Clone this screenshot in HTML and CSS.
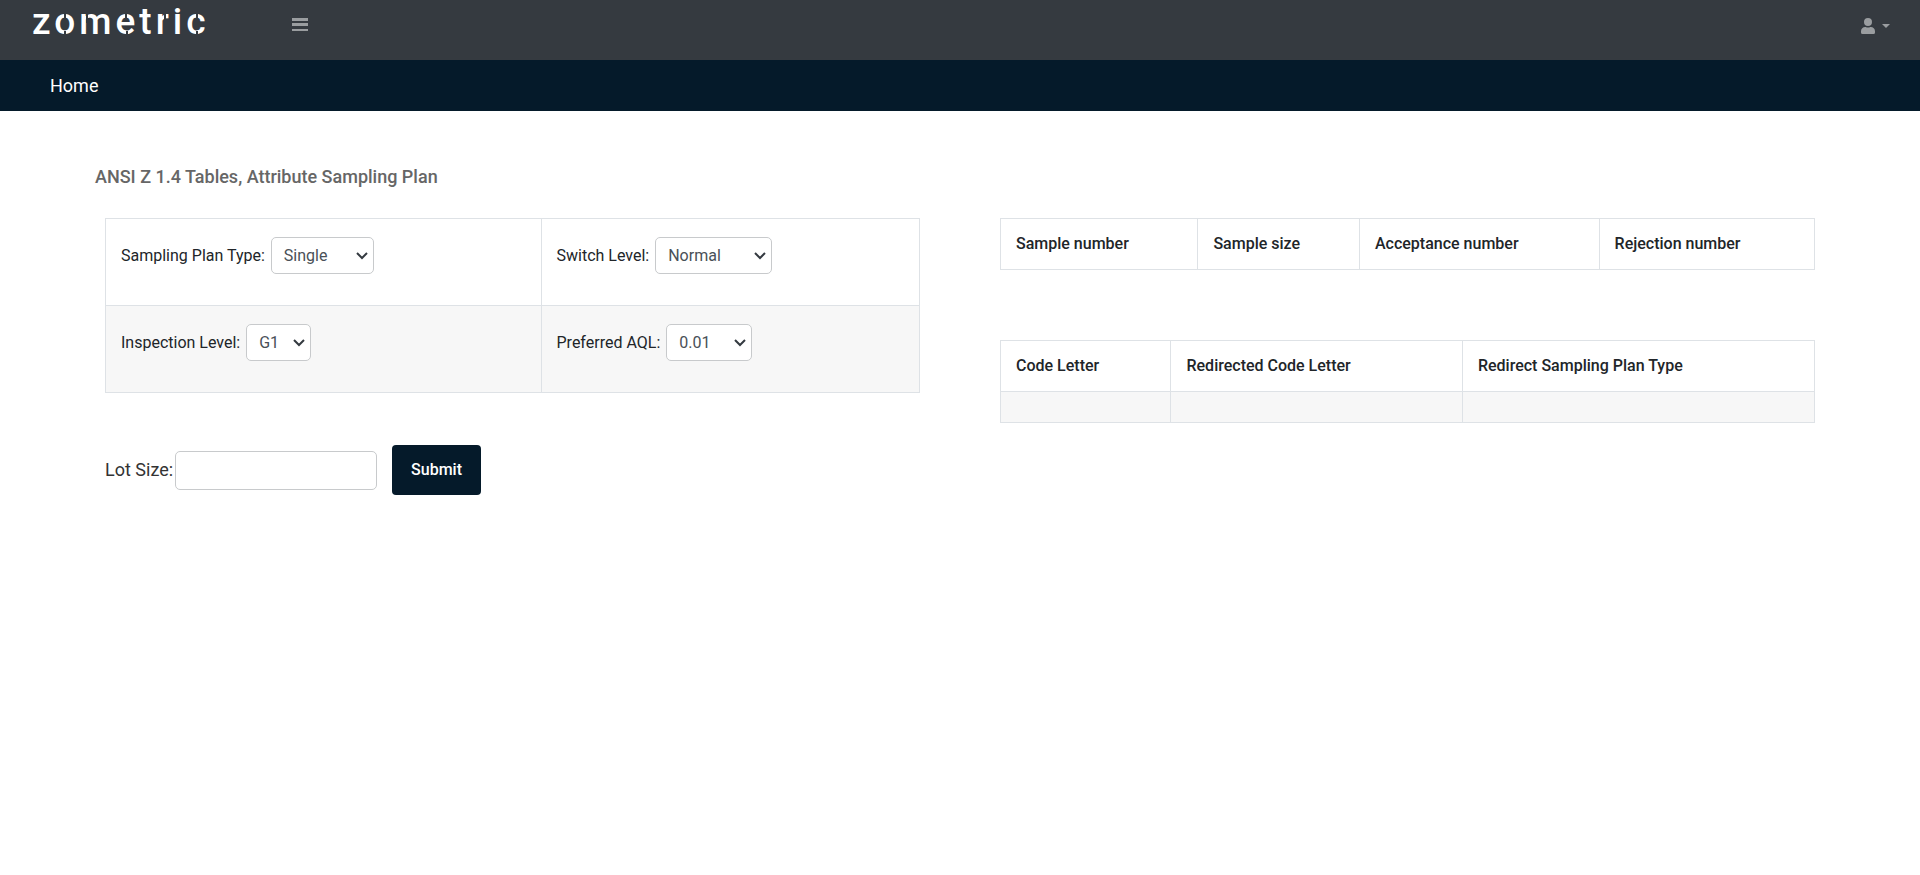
FILE: index.html
```html
<!DOCTYPE html>
<html lang="en">
<head>
<meta charset="utf-8">
<meta name="viewport" content="width=device-width, initial-scale=1">
<title>ANSI Z 1.4 Tables, Attribute Sampling Plan</title>
<link rel="stylesheet" href="styles.css">
</head>
<body>
<header class="topbar">
  <a class="brand" href="#">zometric
    <svg class="brand-cuts" viewBox="0 0 180 40" aria-hidden="true">
      <path d="M33 13v7M33 31v7M55 14v9M94 13v7M95 31v7M133 14v9M165 13v7M165 31v7"/>
    </svg>
  </a>
  <button class="icon-button" type="button" aria-label="Toggle menu">
    <svg width="16" height="14" viewBox="0 0 16 14"><path fill="currentColor" d="M0 0h16v3H0zM0 5h16v3H0zM0 11h16v2H0z"/></svg>
  </button>
  <button class="icon-button user-menu" type="button" aria-label="Account">
    <svg width="14" height="16" viewBox="0 0 14 16"><path fill="currentColor" d="M7 8a4 4 0 1 0 0-8 4 4 0 0 0 0 8zm2.800 1h-.5a5.500 5.500 0 0 1-4.600 0h-.5A4.200 4.200 0 0 0 0 13.200v1.300A1.500 1.500 0 0 0 1.500 16h11a1.500 1.500 0 0 0 1.500-1.500v-1.300A4.200 4.200 0 0 0 9.800 9z"/></svg>
    <svg width="8" height="4" viewBox="0 0 8 4"><path fill="currentColor" d="M0 0h8L4 4z"/></svg>
  </button>
</header>
<nav class="subnav"><a href="#">Home</a></nav>
<main class="page">
  <h1 class="title">ANSI Z 1.4 Tables, Attribute Sampling Plan</h1>
  <div class="columns">
    <form class="plan">
      <table class="table form-table">
        <tbody>
          <tr>
            <td><label for="plan">Sampling Plan Type:</label>
              <select class="control" id="plan"><option>Single</option><option>Double</option><option>Multiple</option></select></td>
            <td><label for="switch">Switch Level:</label>
              <select class="control" id="switch"><option>Normal</option><option>Tightened</option><option>Reduced</option></select></td>
          </tr>
          <tr>
            <td><label for="level">Inspection Level:</label>
              <select class="control" id="level"><option>G1</option><option>G2</option><option>G3</option><option>S1</option><option>S2</option></select></td>
            <td><label for="aql">Preferred AQL:</label>
              <select class="control" id="aql"><option>0.01</option><option>0.015</option><option>0.025</option></select></td>
          </tr>
        </tbody>
      </table>
      <div class="lot">
        <label for="lot">Lot Size:</label>
        <input class="control lot-input" id="lot" type="text">
        <button class="submit" type="button">Submit</button>
      </div>
    </form>
    <section class="results">
      <table class="table">
        <thead><tr><th>Sample number</th><th>Sample size</th><th>Acceptance number</th><th>Rejection number</th></tr></thead>
      </table>
      <table class="table">
        <thead><tr><th>Code Letter</th><th>Redirected Code Letter</th><th>Redirect Sampling Plan Type</th></tr></thead>
        <tbody><tr><td></td><td></td><td></td></tr></tbody>
      </table>
    </section>
  </div>
</main>
</body>
</html>
```
FILE: styles.css
```css
* { box-sizing: border-box; }
body {
  margin: 0;
  background: #fff;
  color: #212529;
  font: 16px/20px Roboto, sans-serif;
}
a { color: inherit; text-decoration: none; }
.topbar {
  display: flex;
  align-items: flex-start;
  height: 60px;
  padding: 0 30px 0 32px;
  background: #353a40;
}
.brand {
  position: relative;
  width: 260px;
  color: #fff;
  font-size: 37px;
  font-weight: 500;
  line-height: 44px;
  letter-spacing: 4px;
}
.brand-cuts {
  position: absolute;
  left: 0;
  top: 0;
  width: 180px;
  height: 40px;
  fill: none;
  stroke: #353a40;
  stroke-width: 2;
}
.icon-button {
  display: flex;
  padding: 18px 0 0;
  border: 0;
  background: none;
  color: #9a9da0;
}
.user-menu {
  align-items: center;
  gap: 7px;
  margin-left: auto;
}
.subnav {
  padding: 16px 50px 15px;
  background: #051a2a;
  color: #fff;
  font-size: 18px;
}
.page { padding: 56px 105px 40px; }
.title {
  margin: 0 -10px 31px;
  color: #666;
  font-size: 18px;
  font-weight: 500;
  line-height: 20px;
}
.columns {
  display: grid;
  grid-template-columns: 1fr 1fr;
  gap: 80px;
}
.table {
  width: 100%;
  border-collapse: collapse;
}
.table th, .table td {
  padding: 15px;
  border: 1px solid #dee2e6;
  text-align: left;
}
.table th { font-weight: 500; }
.results .table td, .form-table tr:nth-child(2) { background: #f7f7f7; }
.table.form-table td { padding: 18px 15px 31px; }
.control {
  height: 37px;
  padding: 6px 31px 6px 12px;
  border: 1px solid #c8cacc;
  border-radius: 5px;
  background: #fff;
  color: #495057;
  font: inherit;
}
select.control {
  appearance: none;
  margin-left: 2px;
  background: #fff url("data:image/svg+xml,%3Csvg xmlns='http://www.w3.org/2000/svg' width='12' height='8'%3E%3Cpath d='M1 1l5 5 5-5' fill='none' stroke='%23343a40' stroke-width='2'/%3E%3C/svg%3E") no-repeat right 5px center;
}
.lot {
  display: flex;
  align-items: center;
  margin-top: 52px;
  font-size: 18px;
  color: #333;
}
.lot-input {
  width: 202px;
  height: 39px;
  margin: 0 15px 0 2px;
}
.submit {
  height: 50px;
  padding: 0 19px;
  border: 0;
  border-radius: 4px;
  background: #051a2a;
  color: #fff;
  font: 500 16px/20px Roboto, sans-serif;
}
.results {
  display: grid;
  align-content: start;
  gap: 70px;
}
```
